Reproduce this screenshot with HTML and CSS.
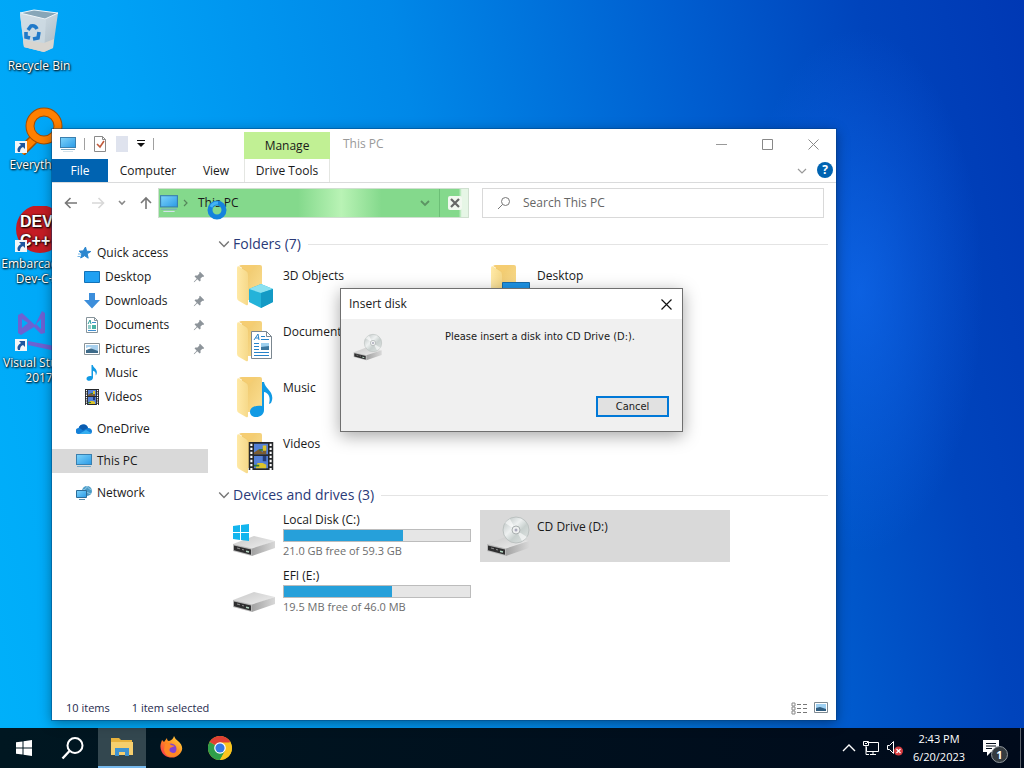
FILE: index.html
```html
<!DOCTYPE html>
<html lang="en">
<head>
    <meta charset="UTF-8">
    <meta name="viewport" content="width=device-width, initial-scale=1.0">
    <title>This PC</title>
    <link rel="stylesheet" href="styles.css">
</head>
<body>

    <!-- shared icons -->
    <svg class="sprite" aria-hidden="true">
        <defs>
            <linearGradient id="gScreen" x1="0" y1="0" x2="1" y2="1"><stop offset="0" stop-color="#7fd4fb"/><stop offset="1" stop-color="#2a9ae6"/></linearGradient>
            <linearGradient id="gFolder" x1="0" y1="0" x2="1" y2="0"><stop offset="0" stop-color="#ffe9a6"/><stop offset="1" stop-color="#f6d98a"/></linearGradient>
            <linearGradient id="gBack" x1="0" y1="0" x2="1" y2="1"><stop offset="0" stop-color="#eec566"/><stop offset="1" stop-color="#fbdf94"/></linearGradient>
            <linearGradient id="gTop" x1="0" y1="0" x2="1" y2="1"><stop offset="0" stop-color="#c8c8c8"/><stop offset="1" stop-color="#f0f0f0"/></linearGradient>
            <linearGradient id="gSide" x1="0" y1="0" x2="1" y2="0"><stop offset="0" stop-color="#a2a2a2"/><stop offset="1" stop-color="#d8d8d8"/></linearGradient>
            <linearGradient id="gDisc" x1="0" y1="0" x2="1" y2="1"><stop offset="0" stop-color="#b4bcbb"/><stop offset=".4" stop-color="#eef1f1"/><stop offset=".6" stop-color="#c8d0ce"/><stop offset="1" stop-color="#e2e6e5"/></linearGradient>
            <linearGradient id="gFox" x1="1" y1="0" x2="0" y2="1"><stop offset="0" stop-color="#ffe14a"/><stop offset=".5" stop-color="#ff8a1f"/><stop offset="1" stop-color="#f5255a"/></linearGradient>
            <linearGradient id="gBin" x1="0" y1="0" x2="1" y2="1"><stop offset="0" stop-color="#dbe7ee"/><stop offset="1" stop-color="#a9b9c4"/></linearGradient>
        </defs>
        <symbol id="pc" viewBox="0 0 16 16">
            <rect x=".5" y="1.500" width="15" height="10" fill="url(#gScreen)" stroke="#3a7fae"/>
            <path d="M1 13.500h14" stroke="#7aa9c4"/><path d="M3 15.500h10" stroke="#d3e2ea"/>
        </symbol>
        <symbol id="pin" viewBox="0 0 12 12">
            <path d="M7 .8 11.200 5l-1 .9-.8-.2-1.900 1.900.1 2.100-.9.900-2.400-2.400-2.800 2.800-.7.200.2-.8 2.700-2.700L1.500 5.300l.9-.9 2.100.1 1.900-1.900-.3-.9z" fill="#8d949a"/>
        </symbol>
        <symbol id="film" viewBox="0 0 16 16">
            <rect x="1" width="14" height="16" fill="#26282b"/>
            <path d="M4 1h8v6H4zM4 8h8v7H4z" fill="#5480d6"/>
            <path d="M4 6l3-2 2 2V3l2-1v5H4z" fill="#7b5d32"/><path d="M9 2h2v3H9zM6 12h3l2 1v2H5z" fill="#dcc42c"/><path d="M4 13h3v1H4zM7 4h2v1H7z" fill="#2f7a3a"/><path d="M9 8h2v3H9z" fill="#253c78"/>
            <path d="M2.500 1v15M13.500 1v15" stroke="#fff" stroke-width="1.200" stroke-dasharray="1.300 1"/>
        </symbol>
        <symbol id="note" viewBox="0 0 16 16">
            <path d="M7.500 0h1.300c.3 2.800 5.700 4.300 3.600 9.500l-.9 1c.8-3-.8-4.300-2.500-4.800v6.800c0 4-6.500 4.300-6.500 1.200 0-2 2.600-3.200 5-2.500z" fill="#119ae4"/>
        </symbol>
        <symbol id="doc" viewBox="0 0 16 16">
            <path d="M2.500.5h8l3 3v12h-11z" fill="#fff" stroke="#87949b"/><path d="M10.500.5v3h3" fill="none" stroke="#87949b"/>
            <path d="M4 7l2-4 1 4M4 9h3M4 11h3" fill="none" stroke="#2a9c96"/><path d="M8 5.500h4M4 13.500h8" stroke="#3f8ed0"/><path d="M8 8h4v4H8z" fill="#48b3a5"/>
        </symbol>
        <symbol id="picture" viewBox="0 0 16 16">
            <path d="M.5 2.500h15v11H.5z" fill="#fff" stroke="#8a9499"/><path d="M2 4h12v8H2z" fill="#a8d0ee"/><path d="M2 9l4-2 8 3v2H2z" fill="#3d6a89"/><path d="M2 7l3-1 3 1-6 2z" fill="#fff"/>
        </symbol>
        <symbol id="down" viewBox="0 0 16 16">
            <path d="M5 0h6v7h5l-8 8.500L0 7h5z" fill="#3c8edb"/>
        </symbol>
        <symbol id="folder" viewBox="0 0 48 48">
            <path d="M12 4h16q2 0 2 2v33H10V6z" fill="url(#gBack)"/>
            <path d="M6 5l8 5q2 1 2 4v29q0 2-2 1l-7-4q-2-1-2-3V7q0-1 1-2z" fill="url(#gFolder)"/>
            <path d="M7 5q1-1 3-1h15l-8 7z" fill="#f5cd72"/>
        </symbol>
        <symbol id="drive" viewBox="0 0 48 48">
            <path d="M1 32 22 24l21 5-23 8z" fill="url(#gTop)"/>
            <path d="M20 36.500 43 29v7l-23 8z" fill="url(#gSide)"/>
            <path d="M1 32l19 4.500V44L1 39z" fill="#b9b9b9"/><path d="M2 33.500l17 4v5.200L2 38.300z" fill="#2f2f30"/>
            <path d="M5 36l3 .8M10 37.500l2 .4" stroke="#8f8f8f"/><path d="M14 39.300l3 .6" stroke="#b7d8c4" stroke-width="1.500"/>
        </symbol>
        <symbol id="cd" viewBox="0 0 48 48">
            <use href="#drive"/>
            <circle cx="30" cy="18" r="13" fill="url(#gDisc)" stroke="#bcc2c1"/>
            <path d="M30 18 19 11a13 13 0 0 1 5-4zM30 18l11 7a13 13 0 0 1-5 4z" fill="#fff" opacity=".6"/>
            <circle cx="30" cy="18" r="4" fill="#eef0f0" stroke="#aab0b0"/><circle cx="30" cy="18" r="1.500" fill="#aab"/>
        </symbol>
        <symbol id="chevron" viewBox="0 0 10 10">
            <path d="M1 3l4 4 4-4" fill="none" stroke="currentColor" stroke-width="1.200"/>
        </symbol>
        <symbol id="shortcut" viewBox="0 0 12 12">
            <path d="M0 0h12v12H0z" fill="#f3f6f8"/><path d="M4 2h6v6L8 6q-3 1-3 5H3Q1 7 6 4z" fill="#1d569f"/>
        </symbol>
    </svg>

    <main class="desktop">
        <nav class="shortcuts" aria-label="Desktop icons">
            <a class="shortcut" href="#">
                <svg viewBox="0 0 48 48">
                    <path d="M5 6l38-1-5 35-9 4-20-5z" fill="url(#gBin)"/><path d="M5 6l26 6-2 32-20-5z" fill="#cddbe4" opacity=".8"/>
                    <path d="M8 32l21 3 10-4-1 9-9 4-20-5z" fill="#d8d5d0"/>
                    <path d="M5 5l14-3 24 3-13 6z" fill="#87a6b8" stroke="#eef5f9"/>
                    <path d="M13 22l3-4q4-1 6 3M24 24l-1 6-5 1M15 30l-4-1v-5" fill="none" stroke="#2079c9" stroke-width="3.600"/>
                </svg>
                <span>Recycle Bin</span>
            </a>
            <a class="shortcut" href="#">
                <svg viewBox="0 0 48 48">
                    <path d="M20 31 6 45" stroke="#a34d00" stroke-width="10"/><path d="M21 30 6 45" stroke="#ff8000" stroke-width="7"/>
                    <circle cx="29" cy="19" r="14" fill="none" stroke="#a34d00" stroke-width="9"/><circle cx="29" cy="19" r="14" fill="none" stroke="#ff8000" stroke-width="7"/>
                    <use href="#shortcut" x="0" y="34" width="12" height="12"/>
                </svg>
                <span>Everything</span>
            </a>
            <a class="shortcut" href="#">
                <svg viewBox="0 0 48 48">
                    <circle cx="25" cy="23" r="24" fill="#c41c24"/>
                    <text class="dev-logo" x="5" y="21">DEV</text><text class="dev-logo" x="5" y="40">C++</text>
                    <use href="#shortcut" x="0" y="34" width="12" height="12"/>
                </svg>
                <span>Embarcadero Dev-C++</span>
            </a>
            <a class="shortcut" href="#">
                <svg viewBox="0 0 48 48">
                    <path d="M3 10l4-2 13 12 7-14 3 2v20l-4 1-7-7L6 30l-3-2zM7 14v9l6-5zM26 14l-5 5 5 5z" fill="#6d62d2" fill-rule="evenodd"/>
                    <path d="M13 36l32 6v5l-32-7z" fill="#6d62d2"/>
                    <use href="#shortcut" x="0" y="34" width="12" height="12"/>
                </svg>
                <span>Visual Studio 2017</span>
            </a>
        </nav>

        <section class="explorer" aria-label="This PC">
            <header class="titlebar">
                <div class="quick-tools">
                    <svg width="16" height="16"><use href="#pc"/></svg>
                    <i class="separator"></i>
                    <button aria-label="Properties"><svg width="14" height="16" viewBox="0 0 14 16"><path d="M1.500.5h8l3 3v12h-11z" fill="#fff" stroke="#8a8a8a"/><path d="M9.500.5v3h3" fill="none" stroke="#8a8a8a"/><path d="M4 8l3 3 4-6" fill="none" stroke="#c05a3b" stroke-width="1.600"/></svg></button>
                    <button aria-label="New folder"><svg width="14" height="16" viewBox="0 0 14 16"><path d="M1 0h12v16H1z" fill="#dfe3ee"/></svg></button>
                    <button aria-label="Customize"><svg width="8" height="8" viewBox="0 0 8 8"><path d="M0 .5h8" stroke="#111"/><path d="M0 3h8L4 7z" fill="#111"/></svg></button>
                    <i class="separator"></i>
                </div>
                <div class="manage">Manage</div>
                <h1>This PC</h1>
                <div class="window-buttons">
                    <button aria-label="Minimize"><svg width="11" height="11" viewBox="0 0 11 11"><path d="M0 5.500h11" stroke="#999"/></svg></button>
                    <button aria-label="Maximize"><svg width="11" height="11" viewBox="0 0 11 11"><path d="M.5.5h10v10H.5z" fill="none" stroke="#888"/></svg></button>
                    <button aria-label="Close"><svg width="11" height="11" viewBox="0 0 11 11"><path d="M.5.5l10 10M10.500.5l-10 10" stroke="#888"/></svg></button>
                </div>
            </header>

            <nav class="tabs">
                <button class="tab file">File</button>
                <button class="tab computer">Computer</button>
                <button class="tab">View</button>
                <button class="tab tools">Drive Tools</button>
                <button class="expand" aria-label="Expand ribbon"><svg width="10" height="10"><use href="#chevron"/></svg></button>
                <button class="help" aria-label="Help">?</button>
            </nav>

            <div class="toolbar">
                <div class="history">
                    <button aria-label="Back"><svg width="14" height="14" viewBox="0 0 14 14"><path d="M13 7H2M6.500 2 1.500 7l5 5" fill="none" stroke="#777" stroke-width="1.600"/></svg></button>
                    <button aria-label="Forward"><svg width="14" height="14" viewBox="0 0 14 14"><path d="M1 7h11M7.500 2l5 5-5 5" fill="none" stroke="#d8d8d8" stroke-width="1.600"/></svg></button>
                    <button aria-label="Recent locations"><svg width="8" height="8" viewBox="0 0 8 8"><path d="M1 2l3 3 3-3" fill="none" stroke="#888" stroke-width="1.600"/></svg></button>
                    <button aria-label="Up"><svg width="14" height="14" viewBox="0 0 14 14"><path d="M7 13V2M2 7l5-5 5 5" fill="none" stroke="#777" stroke-width="1.600"/></svg></button>
                </div>
                <div class="address">
                    <svg width="18" height="18"><use href="#pc"/></svg>
                    <svg class="crumb-arrow" width="8" height="8" viewBox="0 0 8 8"><path d="M2 1l3 3-3 3" fill="none" stroke="currentColor" stroke-width="1.200"/></svg>
                    <button class="crumb">This PC</button>
                    <button class="previous" aria-label="Previous locations"><svg width="10" height="10" viewBox="0 0 10 10"><path d="M1 3l4 4 4-4" fill="none" stroke="currentColor" stroke-width="1.800"/></svg></button>
                    <button class="stop" aria-label="Stop loading"><svg width="14" height="14" viewBox="0 0 14 14"><rect width="14" height="14" rx="2" fill="#f2f8f0"/><path d="M3 3l8 8M11 3l-8 8" stroke="#666" stroke-width="2.200"/></svg></button>
                </div>
                <label class="search">
                    <svg width="14" height="14" viewBox="0 0 14 14"><circle cx="8.500" cy="5.500" r="4" fill="none" stroke="#777"/><path d="M5.500 8.500 1 13" stroke="#777"/></svg>
                    <input type="search" aria-label="Search This PC" placeholder="Search This PC">
                </label>
            </div>

            <div class="panes">
                <nav class="tree">
                    <a href="#"><svg width="16" height="16" viewBox="0 0 16 16"><path d="M9.500 2l1.100 4.200 4.200.3-3.600 2.300 1 4.400-3.600-2.500L4.700 13l1.200-4.300L3 6.100l4.200-.2z" fill="#2a86cf" stroke="#2a86cf"/><path d="M2 9h3M1.500 11.500h3" stroke="#75b6e6"/></svg>Quick access</a>
                    <a class="sub" href="#"><svg width="16" height="16" viewBox="0 0 16 16"><path d="M.5 2.500h15v11H.5z" fill="#1fa0f2" stroke="#1272b8"/></svg>Desktop<svg class="pin" width="12" height="12"><use href="#pin"/></svg></a>
                    <a class="sub" href="#"><svg width="16" height="16"><use href="#down"/></svg>Downloads<svg class="pin" width="12" height="12"><use href="#pin"/></svg></a>
                    <a class="sub" href="#"><svg width="16" height="16"><use href="#doc"/></svg>Documents<svg class="pin" width="12" height="12"><use href="#pin"/></svg></a>
                    <a class="sub" href="#"><svg width="16" height="16"><use href="#picture"/></svg>Pictures<svg class="pin" width="12" height="12"><use href="#pin"/></svg></a>
                    <a class="sub" href="#"><svg width="16" height="16"><use href="#note"/></svg>Music</a>
                    <a class="sub" href="#"><svg width="16" height="16"><use href="#film"/></svg>Videos</a>
                    <a class="root" href="#"><svg width="16" height="16" viewBox="0 0 16 16"><path d="M3 13a3 3 0 0 1-.5-6Q4 3 8 3.500q3 0 4 3.500 4 .3 4 3.500 0 2.500-3 2.500z" fill="#1480d8"/><path d="M3 6.500Q4 3 8 3.500q3 0 4 3.500l-5 2.500z" fill="#0a5cb0"/><path d="M3 13l7-4 5 3q-1 1-2 1z" fill="#35aef0"/></svg>OneDrive</a>
                    <a class="root selected" href="#"><svg width="16" height="16"><use href="#pc"/></svg>This PC</a>
                    <a class="root" href="#"><svg width="16" height="16" viewBox="0 0 16 16"><circle cx="11" cy="6" r="5" fill="#4b9bc7"/><path d="M7 5q3 0 4-4 1 3 5 4M8 9q3-3 7 0" fill="none" stroke="#91c9e4"/><path d="M.5 5.500h10v7H.5z" fill="url(#gScreen)" stroke="#2c6d98"/><path d="M3 14.500h6" stroke="#5b8eab"/></svg>Network</a>
                </nav>

                <div class="content">
                    <h2><svg width="12" height="12"><use href="#chevron"/></svg>Folders (7)</h2>
                    <div class="tiles">
                        <a class="tile" href="#"><svg viewBox="0 0 48 48"><use href="#folder"/><path d="M17 28l12-5 12 5v13l-12 6-12-6z" fill="#24b3d9"/><path d="M17 28l12-5 12 5-12 4z" fill="#8be1f0"/><path d="M29 32l12-4v13l-12 6z" fill="#149ac5"/></svg><span>3D Objects</span></a>
                        <a class="tile" href="#"><svg viewBox="0 0 48 48"><use href="#folder"/><path d="M16.500 21.500h27v20h-27z" fill="#1d95e8" stroke="#176cab"/></svg><span>Desktop</span></a>
                        <a class="tile" href="#"><svg viewBox="0 0 48 48"><use href="#folder"/><path d="M19.500 14.500h15l5 5v22h-20z" fill="#fff" stroke="#7b8790"/><path d="M34.500 14.500v5h5" fill="none" stroke="#7b8790"/><path d="M22 23l4-6 1 6M23.500 21H27M29 19.500h4M29 22.500h8M22 26.500h5M22 29.500h5M22 32.500h5M22 35.500h15M22 38.500h15" fill="none" stroke="#2683c9"/><path d="M29 26h8v7h-8z" fill="#3d789f"/><path d="M29 26h8v3l-8 1z" fill="#9ed0ee"/></svg><span>Documents</span></a>
                        <a class="tile" href="#" aria-label="Downloads"><svg viewBox="0 0 48 48"><use href="#folder"/><use href="#down" x="18" y="20" width="24" height="24"/></svg></a>
                        <a class="tile" href="#"><svg viewBox="0 0 48 48"><use href="#folder"/><path d="M30 9h2c1 7 12 10 7 21l-2 1c2-8-1-11-5-12v18c0 9-14 9-14 2 0-5 6-7 12-6z" fill="#119ae4"/></svg><span>Music</span></a>
                        <a class="tile" href="#" aria-label="Pictures"><svg viewBox="0 0 48 48"><use href="#folder"/><use href="#picture" x="17" y="18" width="26" height="26"/></svg></a>
                        <a class="tile" href="#"><svg viewBox="0 0 48 48"><use href="#folder"/><use href="#film" x="15" y="13" width="28" height="28"/></svg><span>Videos</span></a>
                    </div>

                    <h2><svg width="12" height="12"><use href="#chevron"/></svg>Devices and drives (3)</h2>
                    <div class="tiles">
                        <a class="tile drive" href="#">
                            <svg viewBox="0 0 48 48"><use href="#drive"/><path d="M1 14l7-1v7H1zM9 13l8-1v8H9zM1 21h7v7l-7-1zM9 21h8v8l-8-1z" fill="#13b5ee"/></svg>
                            <span>Local Disk (C:)<i class="meter"><i style="width: 64%"></i></i><small>21.0 GB free of 59.3 GB</small></span>
                        </a>
                        <a class="tile selected" href="#"><svg viewBox="0 0 48 48"><use href="#cd"/></svg><span>CD Drive (D:)</span></a>
                        <a class="tile drive" href="#">
                            <svg viewBox="0 0 48 48"><use href="#drive"/></svg>
                            <span>EFI (E:)<i class="meter"><i style="width: 58%"></i></i><small>19.5 MB free of 46.0 MB</small></span>
                        </a>
                    </div>
                </div>
            </div>

            <footer class="status">
                <span>10 items</span>
                <span>1 item selected</span>
                <button class="view-details" aria-label="Details view"><svg width="17" height="13" viewBox="0 0 17 13"><path d="M1 1h3v3H1zM1 5h3v3H1zM1 9h3v3H1z" fill="none" stroke="#888"/><path d="M6 2.500h4M12 2.500h4M6 6.500h4M12 6.500h4M6 10.500h4M12 10.500h4" stroke="#777"/></svg></button>
                <button aria-label="Large icons view"><svg width="14" height="12" viewBox="0 0 14 12"><path d="M.5.5h13v10H.5z" fill="#fff" stroke="#7f8a92"/><path d="M2 2h10v7H2z" fill="#9ed0f2"/><path d="M2 6l4-1 6 2v2H2z" fill="#2f5d80"/></svg></button>
            </footer>
        </section>

        <section class="dialog" role="dialog" aria-label="Insert disk">
            <header>
                <h2>Insert disk</h2>
                <button aria-label="Close"><svg width="11" height="11" viewBox="0 0 11 11"><path d="M.5.5l10 10M10.500.5l-10 10" stroke="#111" stroke-width="1.200"/></svg></button>
            </header>
            <div class="message">
                <svg width="32" height="32"><use href="#cd"/></svg>
                <p>Please insert a disk into CD Drive (D:).</p>
            </div>
            <button class="cancel">Cancel</button>
        </section>

        <svg class="busy" width="20" height="20" viewBox="0 0 20 20"><circle cx="10" cy="10" r="7" fill="none" stroke="#1583dd" stroke-width="5"/><path d="M4 7a7 7 0 0 1 7-4" fill="none" stroke="#43b3f5" stroke-width="3"/></svg>
    </main>

    <footer class="taskbar">
        <button aria-label="Start"><svg width="16" height="16" viewBox="0 0 16 16"><path d="M0 2.300 6.500 1.400v6.100H0zM7.500 1.200 16 0v7.500H7.500zM0 8.500h6.500v6.100L0 13.700zM7.500 8.500H16V16l-8.500-1.200z" fill="#fff"/></svg></button>
        <button aria-label="Search"><svg width="24" height="24" viewBox="0 0 24 24"><circle cx="14" cy="9.500" r="7.500" fill="none" stroke="#fff" stroke-width="2"/><path d="M8.500 15 1.500 22.500" stroke="#fff" stroke-width="2.400"/></svg></button>
        <button class="active" aria-label="File Explorer"><svg width="24" height="24" viewBox="0 0 24 24"><path d="M1 3h8l2 2h11v15H1z" fill="#e8b23d"/><path d="M1 7h22v13H1z" fill="#f6cf6e"/><path d="M5 13h14v8h-4v-4H9v4H5z" fill="#3f93d1"/></svg></button>
        <button aria-label="Firefox"><svg width="24" height="24" viewBox="0 0 24 24"><path d="M15 0q1 3 4 5 5 4 4 9A11 11 0 1 1 2 7l1-3 2 2 3-4q0 3 2 3 4-1 5-5z" fill="url(#gFox)"/><circle cx="12" cy="13" r="5.500" fill="#8142d4"/><path d="M6 8q4-2 6 1l4 1-5 2q-2 4 3 5 4 0 6-4 0 8-8 8-6-1-7-7z" fill="#ff8725"/></svg></button>
        <button aria-label="Chrome"><svg width="24" height="24" viewBox="0 0 24 24"><circle cx="12" cy="12" r="12" fill="#f9c41f"/><path d="M12 12 1.600 6a12 12 0 0 1 20.800 0z" fill="#df4034"/><path d="M12 12 1.600 6A12 12 0 0 0 12 24l5-9z" fill="#2f9e4b"/><path d="M12 6.500h10.700Q26 15 20 21q-4 3-8 3l5-9z" fill="#f9c41f"/><circle cx="12" cy="12" r="5.800" fill="#fff"/><circle cx="12" cy="12" r="4.600" fill="#3478e5"/></svg></button>

        <div class="tray">
            <svg width="14" height="8" viewBox="0 0 14 8"><path d="M1 7l6-6 6 6" fill="none" stroke="#fff" stroke-width="1.400"/></svg>
            <svg width="18" height="16" viewBox="0 0 18 16"><path d="M5 2.500h11.500v9H4.500V7M8 14.500h6M11 12v2M1.500 1.500h5v4h-5zM4 6v8.500h3M3 3.500h2" fill="none" stroke="#fff"/></svg>
            <svg width="18" height="16" viewBox="0 0 18 16"><path d="M1.500 5.500h2l4-4v12l-4-4h-2z" fill="none" stroke="#fff"/><circle cx="12.500" cy="11" r="4.500" fill="#d63c40"/><path d="M10.500 9l4 4M14.500 9l-4 4" stroke="#fff" stroke-width="1.200"/></svg>
            <time class="clock" datetime="2023-06-20T14:43">2:43 PM<br>6/20/2023</time>
            <button class="notifications" aria-label="Notifications"><svg width="18" height="16" viewBox="0 0 18 16"><path d="M1 0h16v12h-8l-4 4v-4H1z" fill="#fff"/><path d="M4 3.500h10M4 6h10M4 8.500h6" stroke="#06101d"/></svg><b>1</b></button>
            <i class="show-desktop"></i>
        </div>
    </footer>
</body>
</html>
```
FILE: styles.css
```css
* {
    box-sizing: border-box;
}

body {
    margin: 0;
    height: 100vh;
    display: flex;
    flex-direction: column;
    overflow: hidden;
    font-family: "Open Sans", "Noto Sans", sans-serif;
    font-size: 12px;
    line-height: 16px;
    color: #1a1a1a;
}

button {
    display: flex;
    align-items: center;
    justify-content: center;
    padding: 0;
    border: none;
    background: none;
    font: inherit;
    color: inherit;
}

a {
    color: inherit;
    text-decoration: none;
}

h1, h2, p {
    margin: 0;
    font-size: 12px;
    font-weight: normal;
}

svg {
    flex: none;
    display: block;
}

.sprite {
    position: absolute;
    width: 0;
    height: 0;
}

/* desktop */

.desktop {
    flex: 1;
    min-height: 0;
    position: relative;
    background:
        radial-gradient(ellipse 12% 36% at 84% 40%, rgba(20, 110, 245, 0.6), rgba(20, 110, 245, 0)),
        linear-gradient(78deg, #00b0fa 0%, #00a2f6 22%, #0088e8 46%, #005ed0 70%, #0044bc 86%, #0038b4 100%);
}

.shortcuts {
    display: grid;
    grid-auto-rows: 99px;
    width: 78px;
}

.shortcut {
    display: flex;
    flex-direction: column;
    align-items: center;
    gap: 2px;
    padding-top: 8px;
    line-height: 15px;
    text-align: center;
    color: #fff;
    text-shadow: 1px 1px 2px #000, 0 0 2px #000;
}

.shortcut svg {
    width: 48px;
    height: 48px;
}

.dev-logo {
    font: bold 16px "Liberation Sans", sans-serif;
    fill: #fff;
}

/* explorer window */

.explorer {
    position: absolute;
    top: 129px;
    right: 188px;
    bottom: 8px;
    left: 52px;
    display: flex;
    flex-direction: column;
    background: #fff;
    box-shadow: 0 0 0 1px rgba(0, 60, 120, 0.4), 0 3px 12px rgba(0, 0, 0, 0.4);
}

.titlebar {
    display: flex;
    height: 30px;
}

.quick-tools {
    display: flex;
    align-items: center;
    gap: 8px;
    width: 192px;
    padding-left: 8px;
}

.separator {
    width: 1px;
    height: 12px;
    background: #a0a0a0;
}

.manage {
    width: 86px;
    margin-top: 3px;
    line-height: 28px;
    text-align: center;
    background: #c1f094;
}

.titlebar h1 {
    flex: 1;
    padding-left: 13px;
    line-height: 30px;
    color: #999;
}

.window-buttons {
    display: flex;
}

.window-buttons button {
    width: 46px;
}

.tabs {
    display: flex;
    height: 24px;
    border-bottom: 1px solid #dadbdc;
}

.tab {
    width: 56px;
}

.file {
    background: #0063b1;
    color: #fff;
}

.computer {
    width: 80px;
}

.tools {
    width: 86px;
    border: solid #e4e6e2;
    border-width: 0 1px;
}

.expand {
    margin-left: auto;
    color: #999;
}

.help {
    width: 16px;
    height: 16px;
    margin: 3px 3px 0 10px;
    border-radius: 50%;
    background: #0063b1;
    color: #fff;
    font-weight: bold;
}

.toolbar {
    display: flex;
    padding: 5px 12px 4px 0;
}

.history {
    display: flex;
    align-items: center;
    gap: 13px;
    width: 106px;
    padding-left: 12px;
}

.address {
    flex: 1;
    display: flex;
    align-items: center;
    height: 30px;
    padding: 0 6px 0 1px;
    border: 1px solid #d0dfd0;
    background: linear-gradient(90deg, #84d98c 0%, #84d98c 45%, #b9f3b5 59%, #84d98c 72%, #84d98c 97%, #e6f6e6 98%);
}

.crumb-arrow {
    margin: 0 8px 0 4px;
    color: #55865a;
}

.previous {
    margin-left: auto;
    width: 30px;
    height: 28px;
    border-right: 1px solid #6cbf76;
    color: #5c9463;
}

.stop {
    width: 22px;
    padding-left: 8px;
}

.search {
    flex: 0 1 342px;
    display: flex;
    align-items: center;
    gap: 12px;
    margin-left: 13px;
    padding-left: 14px;
    border: 1px solid #d9d9d9;
}

.search input {
    flex: 1;
    min-width: 0;
    padding: 0;
    border: none;
    outline: none;
    font: inherit;
}

.search input::placeholder {
    color: #666;
    opacity: 1;
}

.panes {
    flex: 1;
    min-height: 0;
    display: flex;
}

.tree {
    width: 156px;
    padding-top: 19px;
}

.tree a {
    display: flex;
    align-items: center;
    gap: 5px;
    height: 24px;
    padding: 0 3px 0 24px;
}

.tree .sub {
    padding-left: 32px;
}

.tree .root {
    margin-top: 8px;
}

.tree .selected {
    background: #d9d9d9;
}

.pin {
    margin-left: auto;
}

.content {
    flex: 1;
    padding: 7px 8px 0 10px;
}

.content h2 {
    display: flex;
    align-items: center;
    height: 30px;
    font-size: 14px;
    color: #2a3a78;
}

.content h2 svg {
    margin-right: 3px;
    color: #777;
}

.content h2::after {
    content: "";
    flex: 1;
    height: 1px;
    margin-left: 7px;
    background: #e4e4e4;
}

.tiles {
    display: grid;
    grid-template-columns: repeat(auto-fill, 250px);
    grid-auto-rows: 52px;
    gap: 4px;
    margin-bottom: 1px;
    padding-left: 8px;
}

.tile {
    display: flex;
    gap: 3px;
    padding: 2px 5px 0 6px;
}

.tile > svg {
    width: 48px;
    height: 48px;
}

.tile > span {
    flex: 1;
    padding-top: 7px;
}

.drive > span {
    padding-top: 0;
}

.tile small {
    display: block;
    font-size: 11px;
    line-height: 18px;
    color: #6d6d6d;
}

.tile.selected {
    background: #d9d9d9;
}

.meter {
    display: block;
    height: 13px;
    margin-top: 1px;
    border: 1px solid #bcbcbc;
    background: #e6e6e6;
}

.meter i {
    display: block;
    height: 100%;
    background: #26a0da;
}

.status {
    display: flex;
    align-items: center;
    gap: 22px;
    height: 24px;
    padding: 0 8px 0 14px;
    font-size: 11px;
    color: #1e2a4d;
}

.view-details {
    margin-left: auto;
}

.status button + button {
    margin-left: -16px;
}

/* insert disk dialog */

.dialog {
    position: absolute;
    top: 288px;
    left: 340px;
    width: 343px;
    padding-bottom: 14px;
    border: 1px solid #6f6f6f;
    background: #f0f0f0;
    box-shadow: 0 4px 16px rgba(0, 0, 0, 0.35);
}

.dialog header {
    display: flex;
    align-items: center;
    justify-content: space-between;
    height: 30px;
    padding: 0 10px 0 8px;
    background: #fff;
}

.message {
    display: flex;
    gap: 60px;
    padding: 10px 12px 0;
}

.message svg {
    margin-top: 2px;
}

.message p,
.cancel {
    font-family: "DejaVu Sans Condensed", "DejaVu Sans", sans-serif;
    font-size: 11px;
}

.cancel {
    width: 73px;
    height: 21px;
    margin: 33px 13px 0 auto;
    border: 2px solid #0078d7;
    background: #e1e1e1;
}

.busy {
    position: absolute;
    top: 200px;
    left: 207px;
}

/* taskbar */

.taskbar {
    display: flex;
    gap: 1px;
    height: 40px;
    background: linear-gradient(90deg, #001721, #000a1b);
    color: #fff;
}

.taskbar > button {
    width: 48px;
}

.taskbar .active {
    border-bottom: 2px solid #76b9ed;
    background: #33474f;
}

.tray {
    display: flex;
    align-items: center;
    gap: 6px;
    margin-left: auto;
}

.clock {
    width: 58px;
    font-size: 11px;
    line-height: 18px;
    text-align: center;
}

.notifications {
    position: relative;
    width: 34px;
    height: 40px;
}

.notifications b {
    position: absolute;
    right: 0;
    bottom: 5px;
    width: 17px;
    height: 17px;
    border: 1px solid #8f969b;
    border-radius: 50%;
    background: #343b40;
    font-size: 11px;
    line-height: 15px;
}

.show-desktop {
    width: 4px;
    height: 40px;
    margin-left: 6px;
    border-left: 1px solid #5b626b;
}
```
